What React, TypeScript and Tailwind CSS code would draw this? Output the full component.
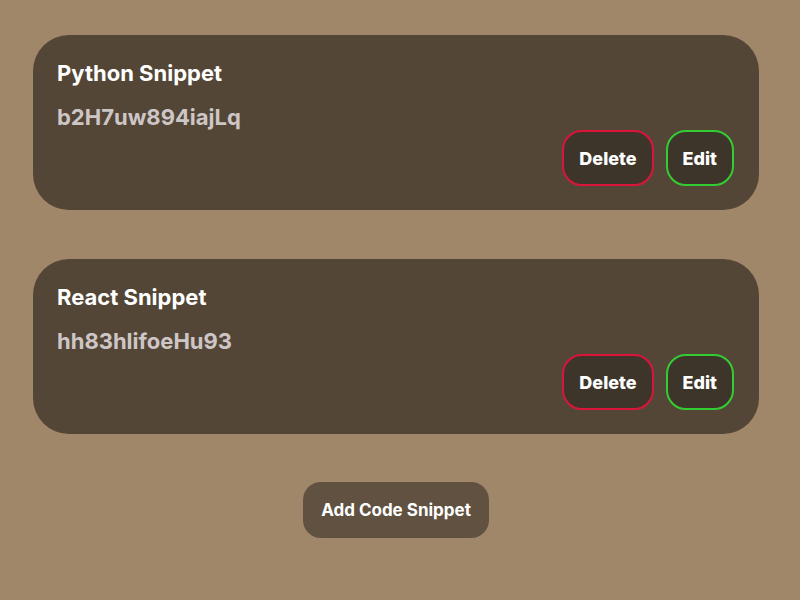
const snippets = [
  { title: "Python Snippet", code: "b2H7uw894iajLq" },
  { title: "React Snippet", code: "hh83hlifoeHu93" },
];

function SnippetCard({ title, code }: { title: string; code: string }) {
  return (
    <article className="flex flex-col rounded-[36px] bg-[#534636] p-6 pr-[25px]">
      <h2 className="text-[22px] leading-7 font-bold text-white">{title}</h2>
      <p className="mt-4 text-[22px] leading-7 font-bold text-[#cec6c6]">{code}</p>
      <div className="-mt-px flex justify-end gap-3">
        <button className="h-14 rounded-[20px] border-2 border-[#dc143c] bg-[#3d3529] px-[15px] pt-px text-lg font-extrabold text-white">
          Delete
        </button>
        <button className="h-14 rounded-[20px] border-2 border-[#32cd32] bg-[#3d3529] px-[15px] pt-px text-lg font-extrabold text-white">
          Edit
        </button>
      </div>
    </article>
  );
}

export default function App() {
  return (
    <main className="flex min-h-screen flex-col bg-[#a08769] pt-[35px] pr-[41px] pl-[33px] font-['Inter',sans-serif]">
      <div className="flex flex-col gap-[49px]">
        {snippets.map((s) => (
          <SnippetCard key={s.title} title={s.title} code={s.code} />
        ))}
      </div>
      <button className="mt-12 h-14 self-center rounded-[18px] bg-[#605141] px-[18px] pt-px text-[17px] font-bold text-white">
        Add Code Snippet
      </button>
    </main>
  );
}
